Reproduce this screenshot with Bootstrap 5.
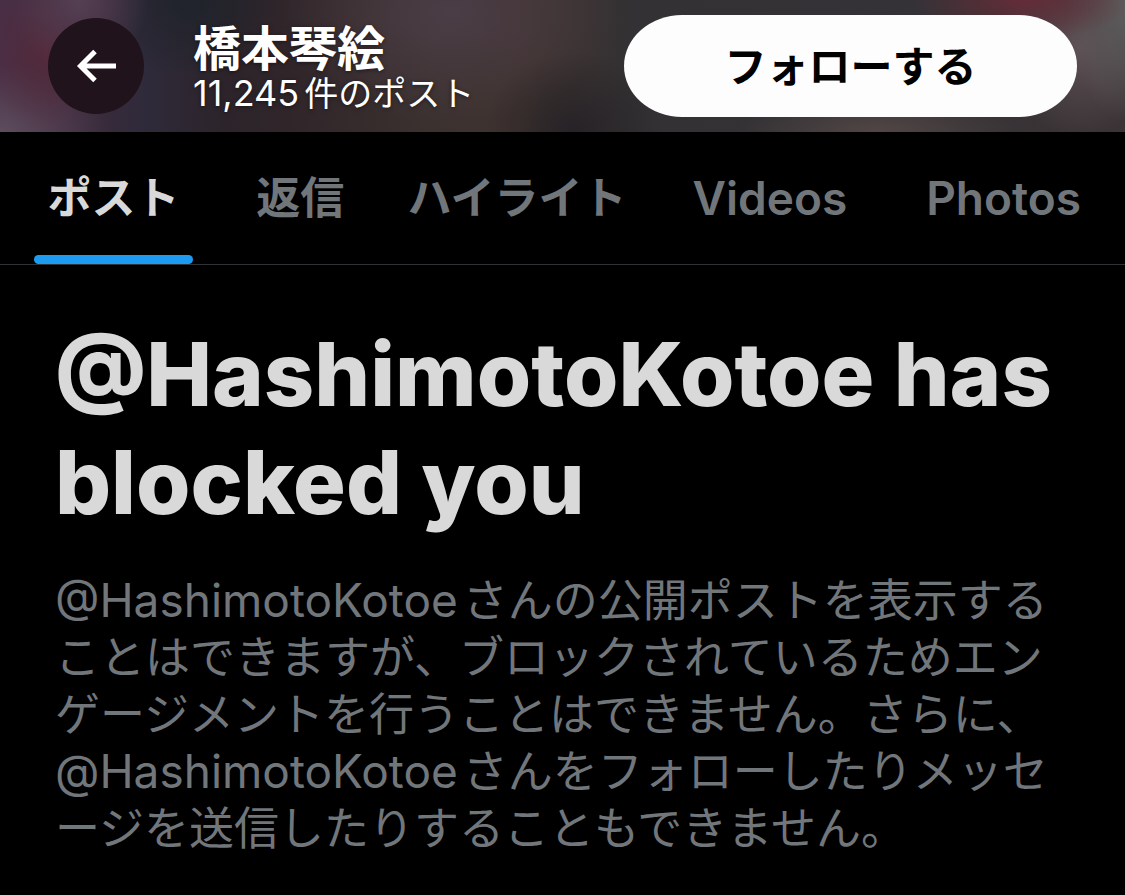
<!DOCTYPE html>
<html lang="ja">
<head>
<meta charset="utf-8">
<meta name="viewport" content="width=device-width, initial-scale=1">
<title>橋本琴絵</title>
<link href="https://cdn.jsdelivr.net/npm/bootstrap@5.3.0/dist/css/bootstrap.min.css" rel="stylesheet">
<style>
body{background:#000;color:#d9d9d9;font-family:Inter,"Noto Sans CJK JP",sans-serif}
.topbar{height:132px;padding:0 48px;color:#fff;
 background:
 radial-gradient(ellipse 110px 40px at 91% 0,#642c38,transparent),
 radial-gradient(ellipse 60px 120px at 100% 0,#5e5e5e,transparent),
 radial-gradient(ellipse 80px 90px at 96% 35%,#5e5155,transparent),
 radial-gradient(ellipse 140px 40px at 78% 100%,#524645,transparent),
 radial-gradient(ellipse 90px 80px at 51% 100%,#262226,transparent),
 radial-gradient(ellipse 70px 70px at 7% 0,#553f52,transparent),
 radial-gradient(ellipse 60px 80px at 4% 40%,#542a3c,transparent),
 radial-gradient(ellipse 110px 70px at 0 100%,#5c4c5c,transparent),
 radial-gradient(ellipse 90px 80px at 17% 0,#1f232b,transparent),
 radial-gradient(ellipse 170px 110px at 40% 10%,#4b3d46,transparent),
 linear-gradient(90deg,#482f46 0,#3a2a3c 8%,#2f2a3a 13%,#2c242a 20%,#32272a 28%,#3b312f 38%,#40332f 47%,#333133 56%,#343236 80%,#3b3335 100%)}
.back-btn{width:96px;height:96px;background:#20131c;color:#fff;border:0}
.profile{margin-left:49px;padding-top:2px;text-shadow:0 1px 4px rgba(0,0,0,.5)}
.profile h1{font-size:48px;line-height:52px;font-weight:700}
.profile p{font-size:34px;line-height:36px}
.post-count{font-size:36px;margin-right:5px}
.follow-btn,.follow-btn:hover{width:453px;height:102px;border:0;border-radius:58px/51px;font-size:42px;font-weight:700;color:#000;background:#fdfdfd}
.tabs{display:grid;grid-template-columns:159fr 215fr 218fr 287fr 181fr;border-bottom:1px solid #2f3336;padding:0 31px 0 34px}
.tabs a{color:#71767b;font-size:44px;font-weight:600;line-height:132px;text-align:center;text-decoration:none;white-space:nowrap}
.tabs .latin{font-size:46px}
.tabs a.active{color:#d9d9d9;position:relative}
.tabs a.active::after{content:"";position:absolute;left:0;right:0;bottom:0;height:9px;border-radius:5px;background:#1d9bf0}
.notice{padding:55px 55px 36px}
.notice h2{font-size:88px;line-height:108px;font-weight:800;margin:0 0 36px}
.notice p{font-size:45px;line-height:57px;color:#71767b;margin:0}
.handle{font-size:46px;line-height:1;margin-right:5px}
</style>
</head>
<body>
<header class="topbar d-flex align-items-center">
<button type="button" class="back-btn rounded-circle d-flex align-items-center justify-content-center flex-shrink-0 p-0" aria-label="戻る"><svg width="40" height="34" viewBox="0 0 40 34" fill="none" stroke="currentColor" stroke-width="5"><path d="M19 2.5 4.5 17 19 31.5M4.5 17H40"/></svg></button>
<div class="profile"><h1 class="m-0">橋本琴絵</h1><p class="m-0"><span class="post-count">11,245</span>件のポスト</p></div>
<button type="button" class="follow-btn btn ms-auto">フォローする</button>
</header>
<nav class="tabs"><a class="active" href="#" aria-current="page">ポスト</a><a href="#">返信</a><a href="#">ハイライト</a><a class="latin" href="#">Videos</a><a class="latin" href="#">Photos</a></nav>
<main class="notice"><h2>@HashimotoKotoe has blocked you</h2><p><span class="handle">@HashimotoKotoe</span>さんの公開ポストを表示することはできますが、ブロックされているためエンゲージメントを行うことはできません。さらに、<span class="handle">@HashimotoKotoe</span>さんをフォローしたりメッセージを送信したりすることもできません。</p></main>
<script src="https://cdn.jsdelivr.net/npm/bootstrap@5.3.0/dist/js/bootstrap.bundle.min.js"></script>
</body>
</html>
